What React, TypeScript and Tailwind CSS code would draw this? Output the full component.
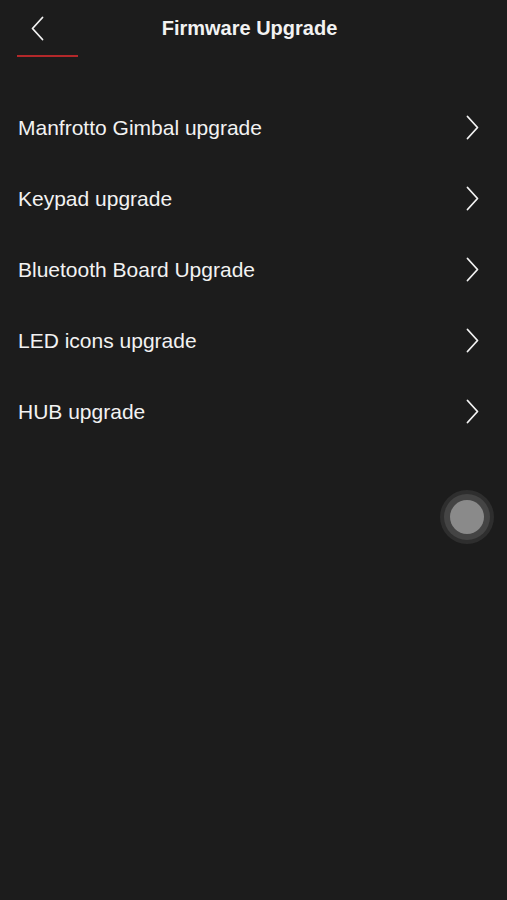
import React from 'react';

const items = [
  'Manfrotto Gimbal upgrade',
  'Keypad upgrade',
  'Bluetooth Board Upgrade',
  'LED icons upgrade',
  'HUB upgrade',
];

function Chevron({ dir }: { dir: 'left' | 'right' }) {
  return (
    <svg width="13" height="25" viewBox="0 0 13 25" fill="none">
      <polyline
        points={dir === 'right' ? '1.5,1.5 11.5,12.5 1.5,23.5' : '11.5,1.5 1.5,12.5 11.5,23.5'}
        stroke="#f2f2f2"
        strokeWidth="1.8"
        strokeLinecap="round"
        strokeLinejoin="round"
      />
    </svg>
  );
}

export default function App() {
  return (
    <div
      className="relative w-[507px] h-[900px] bg-[#1c1c1c] text-[#f2f2f2] overflow-hidden"
      style={{ fontFamily: '"Liberation Sans", Arial, sans-serif' }}
    >
      {/* Header */}
      <div className="flex items-stretch h-[57px]">
        <div className="ml-[17px] w-[61px] border-b-2 border-[#b3282a] pl-[14px] pt-[16px]">
          <Chevron dir="left" />
        </div>
        <div className="flex-1 text-center pt-[16px] text-[20px] font-bold leading-6">
          Firmware Upgrade
        </div>
        <div className="w-[86px]" />
      </div>

      {/* Menu list */}
      <div className="mt-[35px]">
        {items.map((item) => (
          <div key={item} className="flex items-center justify-between h-[71px] pl-[18px] pr-[28px]">
            <span className="text-[21px] leading-none">{item}</span>
            <Chevron dir="right" />
          </div>
        ))}
      </div>

      {/* Floating assistive button */}
      <div className="absolute left-[440px] top-[490px] w-[54px] h-[54px] rounded-full bg-[#2e2e2e] flex items-center justify-center">
        <div className="w-[46px] h-[46px] rounded-full bg-[#444444] flex items-center justify-center">
          <div className="w-[34px] h-[34px] rounded-full bg-[#8a8a8a]" />
        </div>
      </div>
    </div>
  );
}
